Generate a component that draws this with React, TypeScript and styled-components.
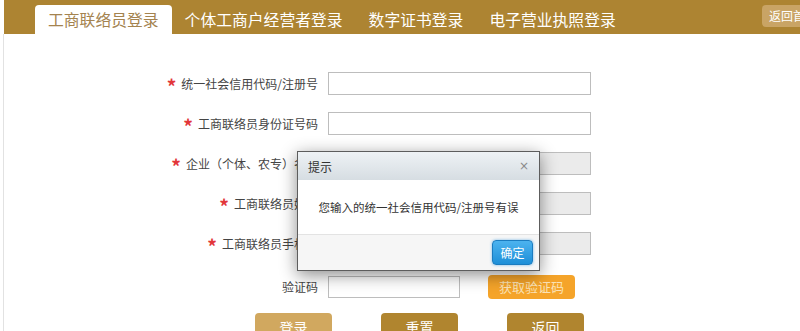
import React from "react";
import styled, { createGlobalStyle } from "styled-components";

const GlobalStyle = createGlobalStyle`
  html, body {
    margin: 0;
    padding: 0;
    background: #fff;
    overflow: hidden;
  }
  body {
    font-family: "Microsoft YaHei", "Noto Sans CJK SC", "Noto Sans", sans-serif;
    color: #333;
  }
`;

const TABS = ["工商联络员登录", "个体工商户经营者登录", "数字证书登录", "电子营业执照登录"];

const FIELDS = [
  { label: "统一社会信用代码/注册号", disabled: false },
  { label: "工商联络员身份证号码", disabled: false },
  { label: "企业（个体、农专）名称", disabled: true },
  { label: "工商联络员姓名", disabled: true },
  { label: "工商联络员手机号", disabled: true },
];

export default function App() {
  const tabs = TABS.map((title, i) => (
    <Tab key={i} $active={i === 0}>
      {title}
    </Tab>
  ));

  const rows = FIELDS.map((f, i) => (
    <FormRow key={i}>
      <Label>
        <Star>*</Star>
        {f.label}
      </Label>
      <TextInput disabled={f.disabled} />
    </FormRow>
  ));

  return (
    <Page>
      <GlobalStyle />
      <HeaderBar>
        <Tabs>{tabs}</Tabs>
        <HomeButton>返回首页</HomeButton>
      </HeaderBar>

      <Content>
        <Form>
          {rows}
          <CodeRow>
            <Label>验证码</Label>
            <CodeInput />
            <CodeButton>获取验证码</CodeButton>
          </CodeRow>
        </Form>

        <Actions>
          <ActionButton $light>登录</ActionButton>
          <ActionButton>重置</ActionButton>
          <ActionButton>返回</ActionButton>
        </Actions>

        <Dialog>
          <DialogHeader>
            <DialogTitle>提示</DialogTitle>
            <CloseMark>×</CloseMark>
          </DialogHeader>
          <DialogBody>您输入的统一社会信用代码/注册号有误</DialogBody>
          <DialogFooter>
            <OkButton>确定</OkButton>
          </DialogFooter>
        </Dialog>
      </Content>
    </Page>
  );
}

const Page = styled.div`
  width: 800px;
  height: 331px;
  overflow: hidden;
`;

const HeaderBar = styled.header`
  display: flex;
  align-items: flex-end;
  height: 34px;
  margin-left: 4px;
  padding-left: 31px;
  background: #ad8432;
  overflow: hidden;
`;

const Tabs = styled.nav`
  display: flex;
  align-items: flex-end;
`;

const Tab = styled.div<{ $active?: boolean }>`
  height: 29px;
  padding: 0 13px;
  font-size: 15.8px;
  line-height: 29px;
  white-space: nowrap;
  color: ${(p) => (p.$active ? "#a4834f" : "#fff")};
  background: ${(p) => (p.$active ? "#fff" : "transparent")};
  border-radius: 4px 4px 0 0;
`;

const HomeButton = styled.div`
  align-self: flex-start;
  margin: 5px -24px 0 auto;
  flex: none;
  height: 22px;
  padding: 0 7px;
  font-size: 12px;
  line-height: 21px;
  color: #fff;
  background: #c9a465;
  border-radius: 4px;
  white-space: nowrap;
`;

const Content = styled.main`
  position: relative;
  height: 297px;
  margin-left: 3px;
  border-left: 1px solid #e2e2e2;
`;

const Form = styled.div`
  display: flex;
  flex-direction: column;
  gap: 17px;
  padding-top: 38px;
`;

const FormRow = styled.div`
  display: grid;
  grid-template-columns: 314px 263px;
  column-gap: 10px;
  align-items: center;
  height: 23px;
`;

const CodeRow = styled(FormRow)`
  grid-template-columns: 314px 132px 87px;
  column-gap: 10px;
  margin-top: 3px;
  height: 22px;

  & > :last-child {
    margin-left: 18px;
  }
`;

const Label = styled.label`
  text-align: right;
  font-size: 12px;
  line-height: 16px;
  color: #444;
  white-space: nowrap;
`;

const Star = styled.span`
  display: inline-block;
  margin-right: 5px;
  font-size: 19px;
  font-weight: bold;
  line-height: 12px;
  vertical-align: -5px;
  color: #e2363a;
`;

const TextInput = styled.input`
  box-sizing: border-box;
  width: 263px;
  height: 23px;
  margin: 0;
  border: 1px solid #bdbdbd;
  background: ${(p) => (p.disabled ? "#ebebeb" : "#fff")};
  outline: none;
`;

const CodeInput = styled(TextInput)`
  width: 132px;
  height: 22px;
`;

const CodeButton = styled.div`
  box-sizing: border-box;
  width: 87px;
  height: 24px;
  font-size: 13px;
  line-height: 24px;
  text-align: center;
  color: #fbe3b6;
  background: #f5a42a;
  border-radius: 4px;
`;

const Actions = styled.div`
  display: flex;
  gap: 49px;
  padding: 16px 0 0 251px;
`;

const ActionButton = styled.div<{ $light?: boolean }>`
  width: 77px;
  height: 28px;
  font-size: 14px;
  line-height: 28px;
  text-align: center;
  color: #fff;
  background: ${(p) => (p.$light ? "#d1a85f" : "#b0852f")};
  border-radius: 4px;
`;

const Dialog = styled.div`
  position: absolute;
  left: 293px;
  top: 117px;
  width: 243px;
  box-sizing: border-box;
  border: 1px solid #5d5d5d;
  background: #fff;
  box-shadow: 0 4px 16px rgba(0, 0, 0, 0.45);
`;

const DialogHeader = styled.div`
  display: flex;
  align-items: center;
  justify-content: space-between;
  height: 28px;
  padding: 0 10px;
  background: linear-gradient(#eef2f5, #d6dde2);
`;

const DialogTitle = styled.span`
  font-size: 12px;
  color: #333;
`;

const CloseMark = styled.span`
  font-family: "DejaVu Sans", sans-serif;
  font-size: 12px;
  color: #8a8a8a;
`;

const DialogBody = styled.div`
  height: 54px;
  font-size: 11.5px;
  line-height: 54px;
  text-align: center;
  color: #333;
`;

const DialogFooter = styled.div`
  display: flex;
  justify-content: flex-end;
  height: 36px;
  padding: 5px 6px 0 0;
  box-sizing: border-box;
  border-top: 1px solid #e3e3e3;
  background: #f6f6f6;
`;

const OkButton = styled.div`
  box-sizing: border-box;
  width: 41px;
  height: 25px;
  font-size: 12px;
  line-height: 23px;
  text-align: center;
  color: #fff;
  border: 1px solid #1b7cc0;
  border-radius: 4px;
  background: linear-gradient(#4cb3ef, #1e8fd8);
  box-shadow: 0 0 3px rgba(30, 140, 220, 0.6);
`;
